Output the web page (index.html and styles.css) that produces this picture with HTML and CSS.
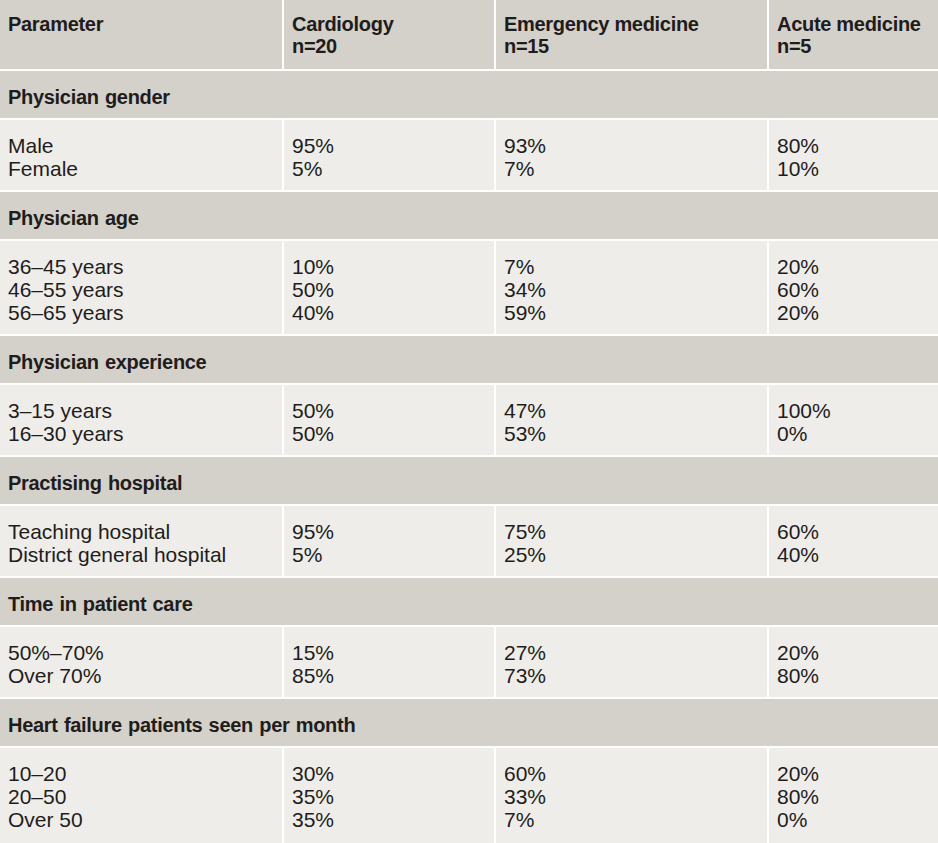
FILE: index.html
```html
<!DOCTYPE html>
<html lang="en">
<head>
<meta charset="utf-8">
<title>Physician characteristics</title>
<link rel="stylesheet" href="styles.css">
</head>
<body>
<div class="table">
  <div class="cell head">Parameter</div>
  <div class="cell head">Cardiology<br>n=20</div>
  <div class="cell head">Emergency medicine<br>n=15</div>
  <div class="cell head">Acute medicine<br>n=5</div>

  <div class="cell section">Physician gender</div>
  <div class="cell data">Male<br>Female</div>
  <div class="cell data">95%<br>5%</div>
  <div class="cell data">93%<br>7%</div>
  <div class="cell data">80%<br>10%</div>

  <div class="cell section">Physician age</div>
  <div class="cell data">36–45 years<br>46–55 years<br>56–65 years</div>
  <div class="cell data">10%<br>50%<br>40%</div>
  <div class="cell data">7%<br>34%<br>59%</div>
  <div class="cell data">20%<br>60%<br>20%</div>

  <div class="cell section">Physician experience</div>
  <div class="cell data">3–15 years<br>16–30 years</div>
  <div class="cell data">50%<br>50%</div>
  <div class="cell data">47%<br>53%</div>
  <div class="cell data">100%<br>0%</div>

  <div class="cell section">Practising hospital</div>
  <div class="cell data">Teaching hospital<br>District general hospital</div>
  <div class="cell data">95%<br>5%</div>
  <div class="cell data">75%<br>25%</div>
  <div class="cell data">60%<br>40%</div>

  <div class="cell section">Time in patient care</div>
  <div class="cell data">50%–70%<br>Over 70%</div>
  <div class="cell data">15%<br>85%</div>
  <div class="cell data">27%<br>73%</div>
  <div class="cell data">20%<br>80%</div>

  <div class="cell section">Heart failure patients seen per month</div>
  <div class="cell data last">10–20<br>20–50<br>Over 50</div>
  <div class="cell data last">30%<br>35%<br>35%</div>
  <div class="cell data last">60%<br>33%<br>7%</div>
  <div class="cell data last">20%<br>80%<br>0%</div>
</div>
</body>
</html>
```
FILE: styles.css
```css
html, body {
  margin: 0;
  padding: 0;
  background: #ffffff;
}

body {
  font-family: "Liberation Sans", Arial, sans-serif;
  color: #1f1c1c;
}

.table {
  display: grid;
  grid-template-columns: 282px 210px 271px 1fr;
  gap: 2px;
  background: #ffffff;
  width: 938px;
}

.cell {
  padding-left: 8px;
  padding-right: 8px;
}

.head {
  background: #d4d0ca;
  font-weight: bold;
  font-size: 20px;
  line-height: 22px;
  letter-spacing: -0.3px;
  padding-top: 13px;
  padding-bottom: 12px;
}

.section {
  grid-column: 1 / -1;
  background: #d4d0ca;
  font-weight: bold;
  font-size: 20px;
  line-height: 22px;
  letter-spacing: -0.3px;
  word-spacing: 1px;
  padding-top: 15px;
  padding-bottom: 10px;
}

.data {
  background: #eeede9;
  font-size: 21px;
  line-height: 23px;
  padding-top: 14px;
  padding-bottom: 10px;
}

.data.last {
  padding-bottom: 14px;
}
```
